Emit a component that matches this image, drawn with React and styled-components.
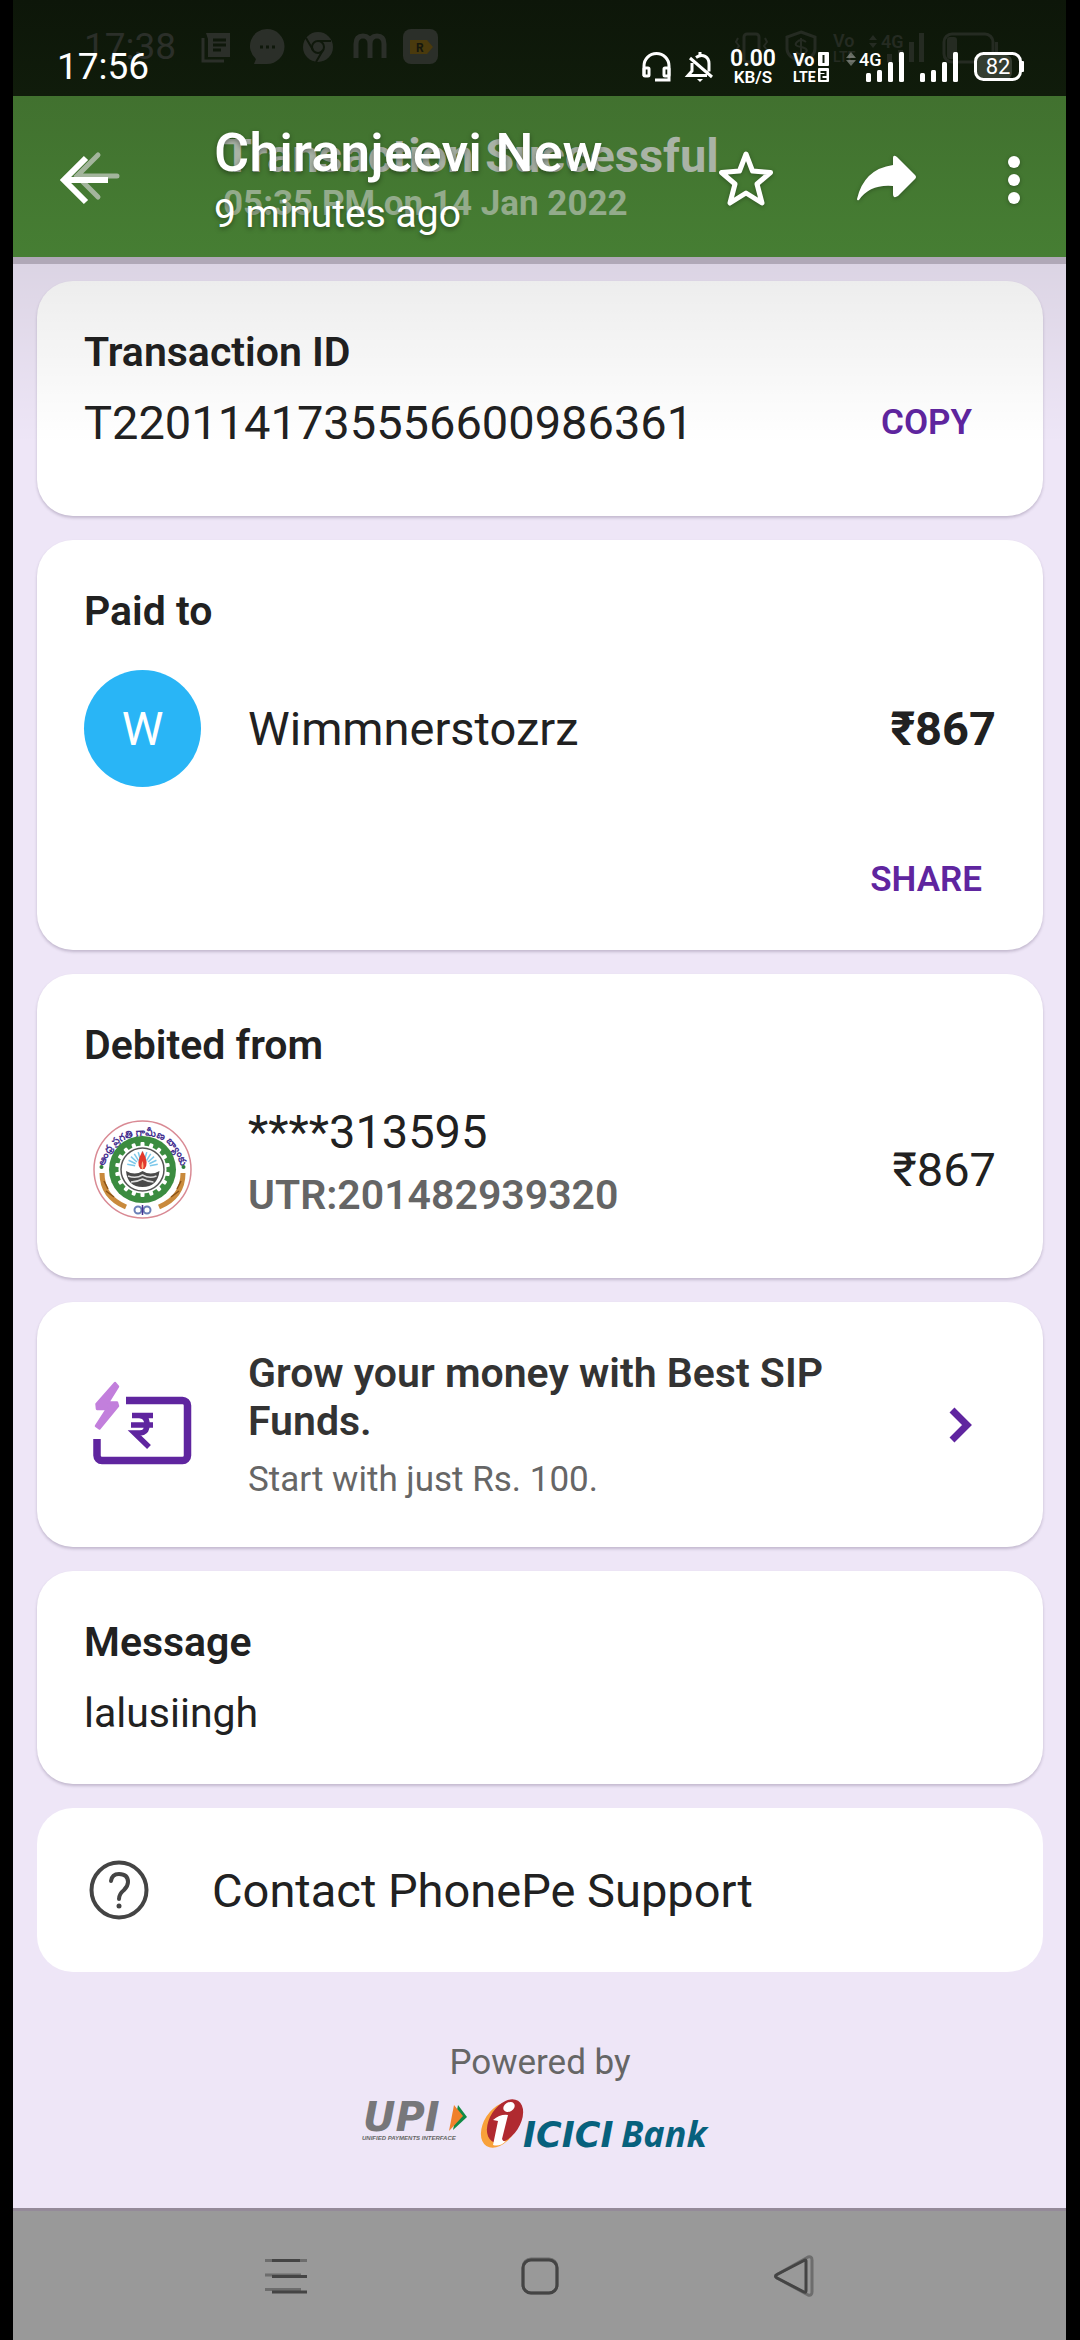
import React from "react";
import styled, { createGlobalStyle, css } from "styled-components";

const GlobalStyle = createGlobalStyle`
  *, *::before, *::after { box-sizing: border-box; }
  body { margin: 0; background: #000; }
  h1, h2, p { margin: 0; }
  button { border: 0; padding: 0; background: none; font: inherit; color: inherit; cursor: pointer; }
  svg { display: block; flex: none; overflow: visible; }
`;

const Screen = styled.div`
  min-height: 100vh;
  display: flex;
  flex-direction: column;
  padding: 0 14px 0 13px;
  background: #000;
  color: #212121;
  font-family: Roboto, "Noto Sans", sans-serif;
`;

/* ---------- status bar ---------- */

const StatusBar = styled.div`
  position: relative;
  height: 96px;
  padding: 38px 42px 0 44px;
  display: flex;
  justify-content: space-between;
  background: linear-gradient(#0d1609, #101c0b);
  color: #fff;
`;

const StatusGroup = styled.div`
  position: relative;
  display: flex;
  align-items: center;
  gap: ${(p) => p.$gap || 0}px;
  height: 58px;
`;

const FadedStatus = styled(StatusBar)`
  position: absolute;
  inset: 0;
  padding: 18px 67px 0 71px;
  background: none;
  color: #2b2f29;
`;

const Clock = styled.time`
  position: relative;
  font-size: 37px;
  line-height: 58px;
`;

const NetSpeed = styled.div`
  display: flex;
  flex-direction: column;
  align-items: center;
  width: 48px;
  font-weight: 600;
  font-size: 17px;
  line-height: 17px;
  strong { font-size: 23px; line-height: 21px; font-weight: 600; }
`;

/* ---------- app bar ---------- */

const AppBar = styled.header`
  position: relative;
  display: flex;
  align-items: center;
  height: 161px;
  padding: 7px 37px 0 47px;
  background: linear-gradient(#41712f, #467e33);
  color: #fff;
`;

const IconButton = styled.button`
  position: relative;
  display: grid;
  place-items: center;
  flex: none;
  width: ${(p) => p.$width}px;
  height: 96px;
`;

const TitleBlock = styled.div`
  position: relative;
  flex: 1;
  min-width: 0;
  margin-left: 106px;
  padding-top: 4px;
  text-shadow: 0 2px 5px rgba(0, 0, 0, 0.4);
  white-space: nowrap;
`;

const Title = styled.h1`
  font-size: 54px;
  line-height: 64px;
  font-weight: 500;
`;

const Subtitle = styled.p`
  font-size: 39px;
  line-height: 58px;
`;

const FadedTitle = styled.div`
  position: absolute;
  left: 210px;
  top: 32px;
  font-weight: 700;
  white-space: nowrap;
  color: #a9b3a6;
  p:first-child { font-size: 47px; line-height: 55px; }
  p:last-child { font-size: 35px; line-height: 41px; color: #93ab8b; }
`;

const FadedArrow = styled.svg`
  position: absolute;
  left: 60px;
  top: 55px;
`;

const BarActions = styled.div`
  display: flex;
  gap: 83px;
  svg { filter: drop-shadow(0 1px 2px rgba(0, 0, 0, 0.3)); }
`;

/* ---------- content ---------- */

const Content = styled.main`
  position: relative;
  flex: 1;
  display: flex;
  flex-direction: column;
  gap: 24px;
  padding: 24px 23px 0 24px;
  background: #eee6f7;
  &::before {
    content: "";
    position: absolute;
    inset: 0 0 auto;
    height: 7px;
    background: #b0a8b7;
  }
  &::after {
    content: "";
    position: absolute;
    inset: 7px 0 auto;
    height: 180px;
    background: linear-gradient(rgba(0, 0, 0, 0.08), rgba(0, 0, 0, 0));
    pointer-events: none;
  }
`;

const Card = styled.section`
  padding: 47px 47px ${(p) => p.$bottom || 47}px;
  border-radius: 36px;
  background: #fff;
  ${(p) =>
    !p.$flat &&
    css`
      box-shadow: 0 2px 3px rgba(60, 40, 80, 0.24);
    `}
`;

const Heading = styled.h2`
  font-size: 41px;
  line-height: 48px;
  font-weight: 600;
  color: ${(p) => (p.$soft ? "#333" : "#212121")};
`;

const Row = styled.div`
  display: flex;
  align-items: center;
  gap: 47px;
  margin-top: ${(p) => p.$top || 0}px;
  min-height: ${(p) => p.$height || 0}px;
`;

const Body = styled.div`
  flex: 1;
  min-width: 0;
  align-self: ${(p) => (p.$start ? "flex-start" : "center")};
  overflow-wrap: anywhere;
`;

const Large = styled.p`
  font-size: 47px;
  line-height: 55px;
`;

const Medium = styled.p`
  margin-top: ${(p) => p.$top || 0}px;
  font-size: 41px;
  line-height: 48px;
  font-weight: ${(p) => (p.$strong ? 600 : 400)};
  color: ${(p) => (p.$strong ? "#656565" : "#212121")};
`;

const Small = styled.p`
  margin-top: ${(p) => p.$top || 0}px;
  font-size: 35px;
  line-height: 41px;
  color: #666;
`;

const Amount = styled(Large)`
  font-weight: ${(p) => (p.$strong ? 700 : 400)};
`;

const Avatar = styled.div`
  display: grid;
  place-items: center;
  width: 117px;
  height: 117px;
  border-radius: 50%;
  background: #29b5f6;
  color: #fff;
  font-size: 47px;
`;

const TextButton = styled.button`
  padding: 0 ${(p) => p.$side}px;
  font-size: 35px;
  line-height: 41px;
  font-weight: 600;
  color: #5f259f;
`;

const CardActions = styled.div`
  display: flex;
  justify-content: flex-end;
  margin-top: 72px;
`;

const PromoCard = styled(Card).attrs({ as: "a" })`
  display: flex;
  align-items: center;
  gap: 47px;
  color: inherit;
  text-decoration: none;
`;

const SupportCard = styled(Card).attrs({ as: "button" })`
  display: flex;
  align-items: center;
  gap: 58px;
  padding: 47px;
  color: #212121;
  text-align: left;
`;

const Footer = styled.footer`
  display: flex;
  flex-direction: column;
  align-items: center;
  gap: 14px;
  margin-top: 46px;
`;

const Logos = styled.div`
  display: flex;
  gap: 10px;
`;

const NavBar = styled.nav`
  display: flex;
  align-items: center;
  justify-content: center;
  gap: 158px;
  height: 132px;
  border-top: 3px solid #948a99;
  background: #999;
`;

/* ---------- icons ---------- */

const Bars = () => (
  <svg width="38" height="32" fill="currentColor" aria-hidden="true">
    <rect x="0" y="22" width="5" height="9" rx="1.5" />
    <rect x="11" y="19" width="5" height="12" rx="1.5" />
    <rect x="22" y="11" width="5" height="20" rx="1.5" />
    <rect x="33" y="1" width="5" height="30" rx="1.5" />
  </svg>
);

const CellSignal = () => (
  <svg width="59" height="32" fill="currentColor" aria-label="4G signal">
    <path d="M1 7l5-6 5 6zM1 9h10l-5 6z" opacity=".35" />
    <text x="14" y="15" fontSize="18" fontWeight="500">4G</text>
    <rect x="21" y="22" width="5" height="9" rx="1.5" />
    <rect x="32" y="19" width="5" height="12" rx="1.5" />
    <rect x="43" y="11" width="5" height="20" rx="1.5" />
    <rect x="54" y="1" width="5" height="30" rx="1.5" />
  </svg>
);

const Headset = () => (
  <svg width="29" height="32" fill="none" stroke="currentColor" strokeWidth="3" aria-hidden="true">
    <path d="M2 25V15a12.500 12.500 0 0 1 25 0v14h-14" />
    <rect x="2" y="17" width="5" height="8" rx="1" />
    <rect x="22" y="17" width="5" height="8" rx="1" />
  </svg>
);

const BellOff = () => (
  <svg width="26" height="32" fill="none" stroke="currentColor" strokeWidth="3" aria-hidden="true">
    <path d="M9 6.500c7-5 13 0 13 6v8M5 12v8l-4 4.500h19M3 7l22 19M13 1v4" />
    <path d="M10 28h6l-3 3z" fill="currentColor" stroke="none" />
  </svg>
);

const VoLte = () => (
  <svg width="36" height="32" fill="currentColor" fontWeight="700" aria-label="VoLTE">
    <text x="0" y="15" fontSize="18">Vo</text>
    <text x="0" y="31" fontSize="14">LTE</text>
    <rect x="25" y="1" width="11" height="14" rx="1" />
    <rect x="25" y="17" width="11" height="14" rx="1" />
    <path d="M30.500 4v8" stroke="#0f1a0a" strokeWidth="2" />
    <path d="M27.500 21h5v3h-4v4h5" fill="none" stroke="#0f1a0a" strokeWidth="2" />
  </svg>
);

const Battery = () => (
  <svg width="50" height="32" fill="none" aria-label="Battery 82%">
    <rect x="3" y="4" width="35" height="24" rx="6" fill="#343d30" />
    <rect x="1.500" y="2.500" width="45" height="26" rx="8" stroke="currentColor" strokeWidth="3" />
    <rect x="47" y="10" width="3" height="11" rx="1" fill="currentColor" />
    <text x="24" y="23" textAnchor="middle" fontSize="22" fill="currentColor">82</text>
  </svg>
);

const FadedLeftIcons = () => (
  <svg width="238" height="36" fill="none" aria-hidden="true">
    <path d="M5 4h24v24H7V10z" fill="#2b2f29" />
    <path d="M2 9v23h21" stroke="#2b2f29" strokeWidth="3" />
    <path d="M12 11h13M12 16h13M12 21h8" stroke="#0f180b" strokeWidth="3" />
    <path d="M66 0a17 17 0 1 1 0 35H53l2-5A17 17 0 0 1 66 0z" fill="#2b2f29" />
    <path d="M59 18h3M65 18h3M71 18h3" stroke="#0f180b" strokeWidth="3" />
    <circle cx="117" cy="18" r="15" fill="#2b2f29" />
    <circle cx="117" cy="18" r="6" stroke="#0f180b" strokeWidth="2" />
    <path d="M117 12h13M112 21l-7-12M122 21l-7 12" stroke="#0f180b" strokeWidth="2" />
    <path d="M155 29V15q0-8 7-8t7 8v14M169 15q0-8 7-8t7 8v14" stroke="#2b2f29" strokeWidth="5" />
    <rect x="202" y="0" width="35" height="35" rx="8" fill="#2b2f29" />
    <path d="M209 11h17l6 7-6 7h-17z" fill="#4a3a0d" />
    <text x="215" y="23" fontSize="12" fontWeight="700" fill="#15170d">R</text>
  </svg>
);

const FadedRightIcons = () => (
  <svg width="264" height="34" fill="none" stroke="#252b22" strokeWidth="3" aria-hidden="true">
    <rect x="9" y="4" width="15" height="28" rx="3" />
    <path d="M3 8l-2 4 3 4-3 4 2 5M30 8l2 4-3 4 3 4-2 5" strokeWidth="2" />
    <path d="M66 2l14 5v12q0 8-14 13-14-5-14-13V7z" />
    <path d="M71 12q-5-4-9 0t4 5q9 2 4 6-5 3-9-1M66 8v18" strokeWidth="2" />
    <g fill="#252b22" stroke="none" fontWeight="600">
      <text x="98" y="17" fontSize="18">Vo</text>
      <text x="98" y="32" fontSize="14">LTE</text>
      <path d="M134 10l4-5 4 5zM134 13h8l-4 5z" />
      <text x="146" y="18" fontSize="18">4G</text>
      <rect x="152" y="24" width="5" height="8" />
      <rect x="163" y="20" width="5" height="12" />
      <rect x="174" y="12" width="5" height="20" />
      <rect x="184" y="3" width="5" height="29" />
      <rect x="212" y="7" width="10" height="22" rx="3" />
      <rect x="260" y="12" width="3" height="10" />
    </g>
    <rect x="209" y="4" width="49" height="28" rx="8" />
  </svg>
);

const BackArrow = () => (
  <svg width="48" height="48" fill="none" stroke="currentColor" strokeWidth="6" aria-hidden="true">
    <path d="M48 24H5M26 2L4 24l22 22" />
  </svg>
);

const Star = () => (
  <svg width="54" height="54" viewBox="0 3 54 54" fill="none" stroke="currentColor" strokeWidth="5" strokeLinejoin="round" aria-hidden="true">
    <path d="M27 4l6.500 17 18 1.500-13.500 11.500 5 19L27 43l-16 10 5-19L2.500 22.500l18-1.500z" />
  </svg>
);

const ShareArrow = () => (
  <svg width="60" height="46" viewBox="0 2 60 46" fill="currentColor" aria-hidden="true">
    <path d="M37 3q0-4 4-1l18 18q2 2 0 4L42 41q-5 3-5-2v-8Q14 29 3 45q-2 1-2-1Q8 14 37 10z" />
  </svg>
);

const Dots = () => (
  <svg width="14" height="50" fill="currentColor" aria-hidden="true">
    <circle cx="7" cy="7" r="6" />
    <circle cx="7" cy="25" r="6" />
    <circle cx="7" cy="43" r="6" />
  </svg>
);

const rays = Array.from({ length: 11 }, (_, i) => -170 + i * 16);
const teeth = Array.from({ length: 18 }, (_, i) => i * 20);

const BankEmblem = () => (
  <svg width="117" height="117" viewBox="0 0 117 117" fill="none" role="img" aria-label="Bank emblem">
    <defs>
      <path id="emblem-arc" d="M21 54a38.500 38.500 0 0 1 75 0" />
    </defs>
    <circle cx="58.500" cy="58.500" r="48.500" stroke="#d98a94" strokeWidth="1.500" />
    <text fontSize="10" fontWeight="700" fill="#45308f">
      <textPath href="#emblem-arc" startOffset="50%" textAnchor="middle">ఆంధ్ర ప్రగతి గ్రామీణ బ్యాంకు</textPath>
    </text>
    <circle cx="58.500" cy="58.500" r="33.500" fill="#3b8c40" />
    <circle cx="58.500" cy="58.500" r="24" fill="#fff" />
    {teeth.map((a) => (
      <rect key={a} x="56.500" y="31" width="4" height="6" rx="1" fill="#fff" transform={`rotate(${a} 58.500 58.500)`} />
    ))}
    <circle cx="58.500" cy="58.500" r="21.500" stroke="#555" strokeWidth="1.500" />
    {rays.map((a) => (
      <path key={a} d="M66 56h8" stroke="#7cc8ea" strokeWidth="1.500" transform={`rotate(${a} 58.500 56)`} />
    ))}
    <path d="M58.500 40q-7 12-2 18h4q5-6-2-18z" fill="#e3392c" />
    <path d="M58.500 50q-2 5 0 9 2-4 0-9z" fill="#f9b384" />
    <path d="M42 60q9 5 16.500 0 8 5 17 0-2 16-17 16T42 60z" fill="#4a4a4a" />
    <path d="M44 65q8 3 14.500-1 7 4 14 1M47 71q6 0 11.500-3 6 3 11 3" stroke="#ddd" strokeWidth="1.500" />
    <circle cx="17.500" cy="56" r="2" fill="#2f7d3b" />
    <circle cx="99.500" cy="56" r="2" fill="#2f7d3b" />
    <path d="M18 62q0 24 24 34" stroke="#c98a3c" strokeWidth="5" />
    <path d="M99 62q0 24-24 34" stroke="#c98a3c" strokeWidth="5" />
    <path d="M20 70l4 8M22 80l8 6M97 70l-4 8M95 80l-8 6" stroke="#8a5216" strokeWidth="1.500" />
    <circle cx="54" cy="99" r="3.500" stroke="#6a80b8" strokeWidth="2" />
    <circle cx="63" cy="99" r="3.500" stroke="#6a80b8" strokeWidth="2" />
    <path d="M58.500 94v10" stroke="#45308f" strokeWidth="1.500" />
  </svg>
);

const PromoIcon = () => (
  <svg width="117" height="117" viewBox="0 0 117 117" fill="none" aria-hidden="true">
    <path d="M42 34.500h56.500a5 5 0 0 1 5 5v50a5 5 0 0 1-5 5H18a5 5 0 0 1-5-5V73" stroke="#5f259f" strokeWidth="7.500" />
    <path d="M31 17L34 20.500 24 36.500h9L34 40 15.500 62.500 12 60 23 43H13L12.500 38z" fill="#c27fdc" stroke="#c27fdc" strokeWidth="2.500" strokeLinejoin="round" />
    <path d="M48 49.500h21M47 59h22M49 49.500h6q8 0 8 9t-8 8.500h-4.500L65 81" stroke="#5f259f" strokeWidth="5.500" />
  </svg>
);

const Chevron = () => (
  <svg width="70" height="40" fill="none" stroke="#5f259f" strokeWidth="7" aria-hidden="true">
    <path d="M26 5l15 15-15 15" />
  </svg>
);

const HelpIcon = () => (
  <svg width="70" height="70" fill="none" stroke="#444" strokeWidth="4" strokeLinecap="round" aria-hidden="true">
    <circle cx="35" cy="35" r="27.500" />
    <path d="M27 26q1-7 8-7 9 0 9 8 0 4-4 8-5 4-5 9" />
    <circle cx="35" cy="51" r="2.500" fill="#444" stroke="none" />
  </svg>
);

const UpiLogo = () => (
  <svg width="108" height="54" role="img" aria-label="UPI Unified Payments Interface">
    <path d="M96 8l9 12-14 13z" fill="#108a45" />
    <path d="M92 8l9 11-14 15z" fill="#f0802b" />
    <text x="1" y="34" fontFamily="DejaVu Sans, sans-serif" fontSize="40" fontWeight="700" fontStyle="italic" fill="#77777a">UPI</text>
    <text x="0" y="43" fontFamily="Liberation Sans, sans-serif" fontSize="6" fontStyle="italic" fontWeight="700" fill="#666">UNIFIED PAYMENTS INTERFACE</text>
  </svg>
);

const IciciLogo = () => (
  <svg width="238" height="54" role="img" aria-label="ICICI Bank" fill="#07617d">
    <ellipse cx="20" cy="28" rx="16" ry="25" fill="#f8a13a" transform="rotate(33 20 28)" />
    <ellipse cx="25" cy="24" rx="15" ry="24" fill="#b02a30" transform="rotate(33 25 24)" />
    <ellipse cx="29" cy="10" rx="6" ry="4.500" fill="#fff" transform="rotate(-30 29 10)" />
    <path d="M13 23q7-6 15-5l-6 24q1 3 4 2-6 6-13 4l5-24z" fill="#fff" />
    <text x="43" y="50" fontFamily="DejaVu Sans, sans-serif" fontSize="35" fontWeight="700" fontStyle="italic">ICICI</text>
    <text x="141" y="50" fontFamily="Noto Sans, sans-serif" fontSize="36" fontWeight="700" fontStyle="italic">Bank</text>
  </svg>
);

const RecentsIcon = () => (
  <svg width="44" height="44" fill="none" stroke="#444" strokeWidth="3" aria-hidden="true">
    <path d="M1 6.500h42M1 21h36M1 35.500h36" stroke="#6d6d6d" />
    <path d="M8 6.500h28M8 22.500h35M8 38h35" />
  </svg>
);

const HomeIcon = () => (
  <svg width="40" height="44" fill="none" stroke="#444" strokeWidth="3" aria-hidden="true">
    <rect x="3" y="5" width="34" height="34" rx="8" stroke="#6d6d6d" />
    <rect x="3" y="6" width="34" height="33" rx="8" />
  </svg>
);

const NavBackIcon = () => (
  <svg width="44" height="44" fill="none" stroke="#444" strokeWidth="3" strokeLinejoin="round" aria-hidden="true">
    <path d="M5 20.500L36 3q4-1 4 3v32q0 4-4 3L5 24q-3-2 0-3.500z" stroke="#6d6d6d" />
    <path d="M5 20.500L33 6q1 0 1 1v30q0 2-2 1L5 24q-3-2 0-3.500z" />
  </svg>
);

export default function App() {
  return (
    <Screen>
      <GlobalStyle />
      <StatusBar>
        <FadedStatus aria-hidden="true">
          <StatusGroup $gap={25}>
            <Clock>17:38</Clock>
            <FadedLeftIcons />
          </StatusGroup>
          <StatusGroup>
            <FadedRightIcons />
          </StatusGroup>
        </FadedStatus>
        <Clock>17:56</Clock>
        <StatusGroup $gap={16}>
          <Headset />
          <BellOff />
          <NetSpeed>
            <strong>0.00</strong>
            KB/S
          </NetSpeed>
          <VoLte />
          <CellSignal />
          <Bars />
          <Battery />
        </StatusGroup>
      </StatusBar>

      <AppBar>
        <FadedTitle aria-hidden="true">
          <p>Transaction Successful</p>
          <p>05:35 PM on 14 Jan 2022</p>
        </FadedTitle>
        <FadedArrow width="48" height="52" fill="none" stroke="#a3b59c" strokeWidth="5" strokeLinecap="round" aria-hidden="true">
          <path d="M44 25H6M25 4L4 25l21 21" />
        </FadedArrow>
        <IconButton $width={48} aria-label="Back">
          <BackArrow />
        </IconButton>
        <TitleBlock>
          <Title>Chiranjeevi New</Title>
          <Subtitle>9 minutes ago</Subtitle>
        </TitleBlock>
        <BarActions>
          <IconButton $width={54} aria-label="Star">
            <Star />
          </IconButton>
          <IconButton $width={60} aria-label="Forward">
            <ShareArrow />
          </IconButton>
          <IconButton $width={30} aria-label="More options">
            <Dots />
          </IconButton>
        </BarActions>
      </AppBar>

      <Content>
        <Card $bottom={66}>
          <Heading>Transaction ID</Heading>
          <Row $top={19}>
            <Body>
              <Large>T2201141735556600986361</Large>
            </Body>
            <TextButton $side={24}>COPY</TextButton>
          </Row>
        </Card>

        <Card $bottom={50}>
          <Heading>Paid to</Heading>
          <Row $top={35}>
            <Avatar>W</Avatar>
            <Body>
              <Large>Wimmnerstozrz</Large>
            </Body>
            <Amount $strong>₹867</Amount>
          </Row>
          <CardActions>
            <TextButton $side={14}>SHARE</TextButton>
          </CardActions>
        </Card>

        <Card $bottom={44}>
          <Heading>Debited from</Heading>
          <Row $top={35} $height={130}>
            <BankEmblem />
            <Body $start>
              <Large>****313595</Large>
              <Medium $top={12} $strong>UTR:201482939320</Medium>
            </Body>
            <Amount>₹867</Amount>
          </Row>
        </Card>

        <PromoCard href="#sip">
          <PromoIcon />
          <Body>
            <Heading $soft>Grow your money with Best SIP Funds.</Heading>
            <Small $top={14}>Start with just Rs. 100.</Small>
          </Body>
          <Chevron />
        </PromoCard>

        <Card>
          <Heading>Message</Heading>
          <Medium $top={23}>lalusiingh</Medium>
        </Card>

        <SupportCard $flat>
          <HelpIcon />
          <Large as="span">Contact PhonePe Support</Large>
        </SupportCard>

        <Footer>
          <Small>Powered by</Small>
          <Logos>
            <UpiLogo />
            <IciciLogo />
          </Logos>
        </Footer>
      </Content>

      <NavBar>
        <IconButton $width={96} aria-label="Recent apps">
          <RecentsIcon />
        </IconButton>
        <IconButton $width={96} aria-label="Home">
          <HomeIcon />
        </IconButton>
        <IconButton $width={96} aria-label="Back">
          <NavBackIcon />
        </IconButton>
      </NavBar>
    </Screen>
  );
}
